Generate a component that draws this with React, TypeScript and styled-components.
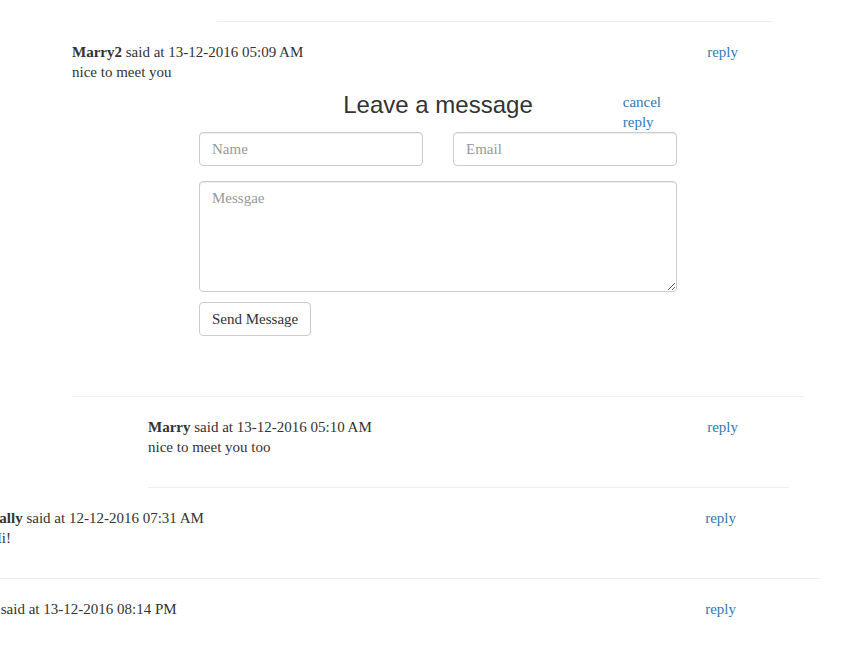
import styled, { createGlobalStyle } from "styled-components";

const GlobalStyle = createGlobalStyle`
  body {
    margin: 0;
    overflow: hidden;
    background: #fff;
    color: #333;
    font-family: "Liberation Serif", serif;
    font-size: 15px;
    line-height: 20px;
  }
`;

interface CommentData {
  name: string;
  date: string;
  text?: string;
}

export default function App() {
  return (
    <>
      <GlobalStyle />
      <Page>
        <Divider $left={217} $width={556} />
        <Comment
          $left={72}
          $replyEnd={738}
          data={{
            name: "Marry2",
            date: "13-12-2016 05:09 AM",
            text: "nice to meet you",
          }}
        />
        <ReplyForm />
        <Divider $left={72} $width={732} />
        <Comment
          $left={148}
          $replyEnd={738}
          data={{
            name: "Marry",
            date: "13-12-2016 05:10 AM",
            text: "nice to meet you too",
          }}
        />
        <Divider $left={148} $width={641} />
        <Comment
          $left={-9}
          $replyEnd={736}
          data={{ name: "Sally", date: "12-12-2016 07:31 AM", text: "Hi!" }}
        />
        <Divider $left={0} $width={820} />
        <Comment
          $left={-33}
          $replyEnd={736}
          data={{ name: "Jack", date: "13-12-2016 08:14 PM" }}
        />
      </Page>
    </>
  );
}

interface CommentProps {
  data: CommentData;
  $left: number;
  $replyEnd: number;
}

const Comment = ({ data, $left, $replyEnd }: CommentProps) => {
  return (
    <CommentBox $left={$left} $replyEnd={$replyEnd}>
      <CommentHeader>
        <span>
          <Author>{data.name}</Author> said at {data.date}
        </span>
        <ReplyLink href="#">reply</ReplyLink>
      </CommentHeader>
      {data.text && <CommentText>{data.text}</CommentText>}
    </CommentBox>
  );
};

const ReplyForm = () => {
  return (
    <FormBox>
      <FormTitleRow>
        <span />
        <FormTitle>Leave a message</FormTitle>
        <CancelLink href="#">cancel reply</CancelLink>
      </FormTitleRow>
      <FieldRow>
        <TextInput placeholder="Name" />
        <TextInput placeholder="Email" />
      </FieldRow>
      <MessageArea placeholder="Messgae" />
      <SendButton>Send Message</SendButton>
    </FormBox>
  );
};

const Page = styled.div`
  width: 841px;
  height: 667px;
  overflow: hidden;
  padding-top: 21px;
  box-sizing: border-box;
`;

const Divider = styled.hr<{ $left: number; $width: number }>`
  margin: 0 0 0 ${(p) => p.$left}px;
  width: ${(p) => p.$width}px;
  height: 0;
  border: 0;
  border-top: 1px solid #eee;
`;

const CommentBox = styled.div<{ $left: number; $replyEnd: number }>`
  margin-left: ${(p) => p.$left}px;
  width: ${(p) => p.$replyEnd - p.$left}px;
  padding: 20px 0 30px;
`;

const CommentHeader = styled.div`
  display: flex;
  justify-content: space-between;
  white-space: nowrap;
`;

const Author = styled.b`
  font-weight: 700;
`;

const ReplyLink = styled.a`
  color: #337ab7;
  text-decoration: none;
`;

const CommentText = styled.div``;

const FormBox = styled.form`
  margin: -20px 0 0 199px;
  width: 478px;
  padding-bottom: 60px;
  display: flex;
  flex-direction: column;
  align-items: flex-start;
`;

const FormTitleRow = styled.div`
  width: 100%;
  display: grid;
  grid-template-columns: 1fr auto 1fr;
  align-items: start;
`;

const FormTitle = styled.h3`
  margin: 0;
  font-family: "Liberation Sans", Arial, sans-serif;
  font-weight: 400;
  font-size: 24px;
  line-height: 26px;
  color: #333;
`;

const CancelLink = styled.a`
  margin-left: 90px;
  width: 50px;
  color: #337ab7;
  text-decoration: none;
`;

const FieldRow = styled.div`
  width: 100%;
  display: grid;
  grid-template-columns: 1fr 1fr;
  column-gap: 30px;
  margin-bottom: 15px;
`;

const fieldBase = `
  box-sizing: border-box;
  width: 100%;
  border: 1px solid #ccc;
  border-radius: 4px;
  padding: 6px 12px;
  font-family: "Liberation Serif", serif;
  font-size: 15px;
  line-height: 20px;
  color: #555;
  background: #fff;
  box-shadow: inset 0 1px 1px rgba(0, 0, 0, 0.075);
  &::placeholder {
    color: #999;
  }
`;

const TextInput = styled.input`
  ${fieldBase}
  height: 34px;
`;

const MessageArea = styled.textarea`
  ${fieldBase}
  height: 111px;
  margin: 0 0 10px;
  resize: vertical;
`;

const SendButton = styled.button`
  height: 34px;
  padding: 6px 12px;
  border: 1px solid #ccc;
  border-radius: 4px;
  background: #fff;
  color: #333;
  font-family: "Liberation Serif", serif;
  font-size: 15px;
  line-height: 20px;
`;
